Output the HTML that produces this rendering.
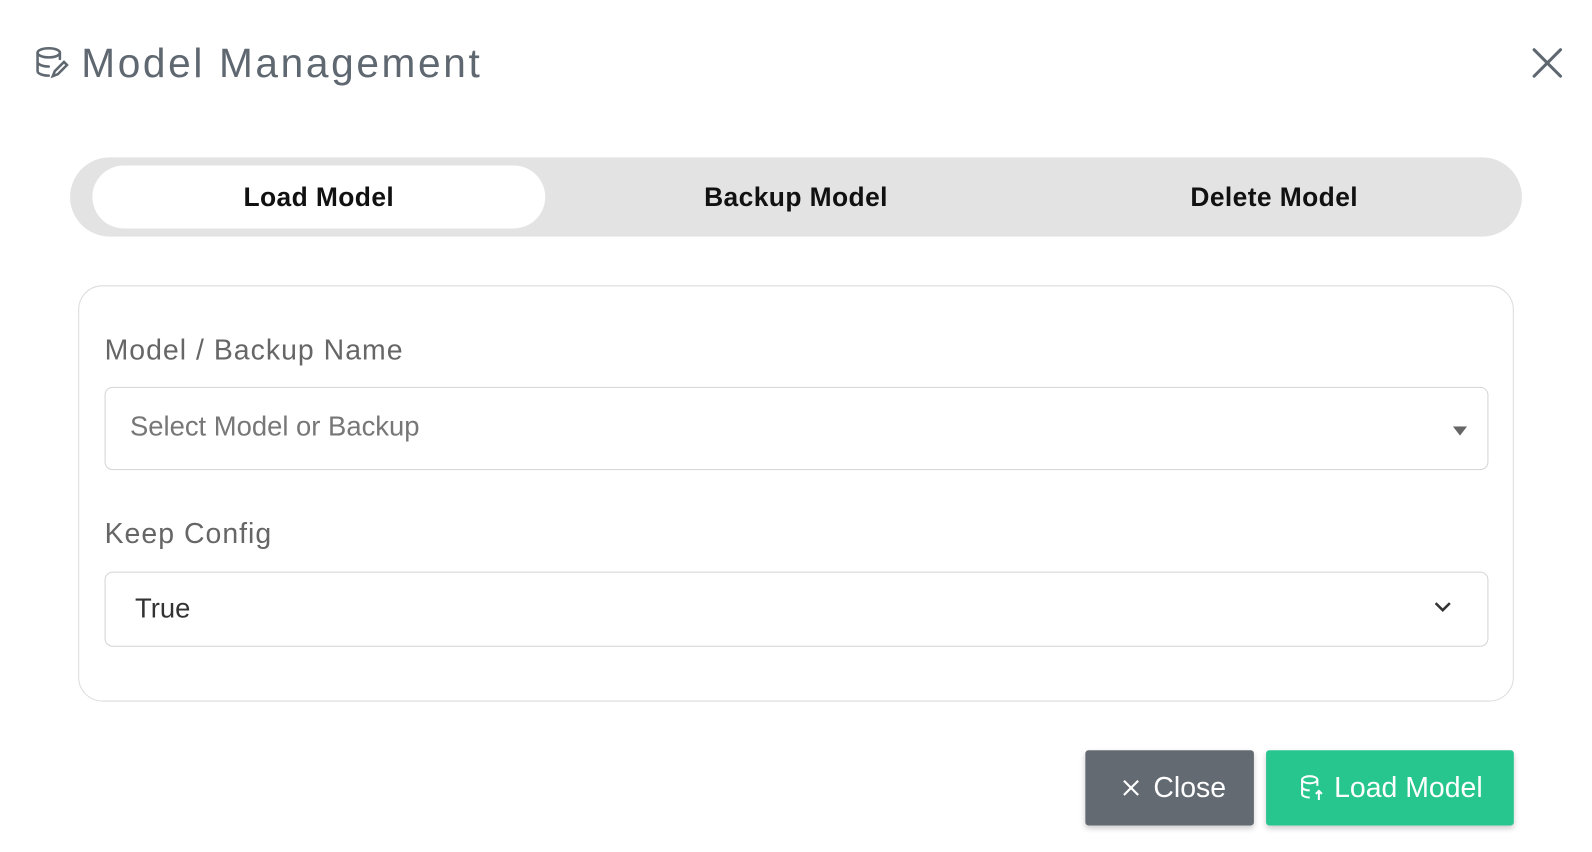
<!DOCTYPE html>
<html><head><style>
body{margin:0;width:1592px;height:852px;background:#fff;font-family:"Liberation Sans",sans-serif;position:relative;overflow:hidden}
#w{position:absolute;left:0;top:0;width:1568px;height:839px;transform:scale(1.0153);transform-origin:0 0}
.abs{position:absolute}
.title{left:80px;top:41px;font-size:40px;color:#5f6770;letter-spacing:2.6px}
.tabs{left:69px;top:155px;width:1430px;height:78px;background:#e3e3e3;border-radius:39px}
.tab{position:absolute;top:0;height:78px;line-height:78px;font-weight:bold;font-size:26px;color:#111;text-align:center;letter-spacing:0.4px}
.active{left:22px;top:8px;width:446px;height:62px;line-height:62px;background:#fff;border-radius:31px}
.card{left:77px;top:281px;width:1412px;height:408px;border:1.5px solid #dcdcdc;border-radius:24px}
.lbl{font-size:28px;color:#666;letter-spacing:1px}
.sel{left:103px;width:1361px;border:1.5px solid #d4d4d4;border-radius:8px;background:#fff}
.btn{top:739px;height:74px;border-radius:3px;color:#fff;font-size:28px;line-height:74px;box-shadow:0 3px 6px rgba(0,0,0,.2)}
</style></head><body><div id="w">
<svg class="abs" style="left:35px;top:45px" width="34" height="34" viewBox="0 0 34 34" fill="none" stroke="#5f6770" stroke-width="2.5" stroke-linecap="round"><ellipse cx="13" cy="7" rx="11" ry="4.5"/><path d="M2 7v18c0 2.5 5 4.5 11 4.5M24 7v6M2 16c0 2.5 5 4.5 11 4.5"/><path d="M17 30l2-5 9-9 3 3-9 9z"/></svg>
<div class="abs title">Model Management</div>
<svg class="abs" style="left:1508px;top:46px" width="32" height="32" viewBox="0 0 32 32" stroke="#5f6770" stroke-width="3" stroke-linecap="round"><path d="M3 3l26 26M29 3L3 29"/></svg>
<div class="abs tabs">
<div class="tab active">Load Model</div>
<div class="tab" style="left:477px;width:476px">Backup Model</div>
<div class="tab" style="left:953px;width:466px">Delete Model</div>
</div>
<div class="abs card"></div>
<div class="abs lbl" style="left:103px;top:329px">Model / Backup Name</div>
<div class="abs sel" style="top:381px;height:80px"><span class="abs" style="left:24px;top:23px;font-size:27px;color:#777">Select Model or Backup</span>
<svg class="abs" style="left:1327px;top:38px" width="14" height="9"><path d="M0 0h14L7 9z" fill="#666"/></svg></div>
<div class="abs lbl" style="left:103px;top:510px">Keep Config</div>
<div class="abs sel" style="top:563px;height:72px"><span class="abs" style="left:29px;top:20px;font-size:27px;color:#333">True</span>
<svg class="abs" style="left:1308px;top:28px" width="18" height="12" fill="none" stroke="#333" stroke-width="2.5"><path d="M2 2l7 7 7-7"/></svg></div>
<div class="abs btn" style="left:1069px;width:166px;background:#636a72"><svg class="abs" style="left:36px;top:28px" width="18" height="18" stroke="#fff" stroke-width="2.2"><path d="M2 2l14 14M16 2L2 16"/></svg><span class="abs" style="left:67px">Close</span></div>
<div class="abs btn" style="left:1247px;width:244px;background:#27c68f"><svg class="abs" style="left:34px;top:24px" width="24" height="26" fill="none" stroke="#fff" stroke-width="2"><ellipse cx="9" cy="5" rx="7.5" ry="3.5"/><path d="M1.5 5v14c0 2 3.5 3.5 7.5 3.5M16.5 5v6M1.5 12c0 2 3.5 3.5 7.5 3.5M18 25v-9M15 19l3-3 3 3"/></svg><span class="abs" style="left:67px">Load Model</span></div>
</div></body></html>
